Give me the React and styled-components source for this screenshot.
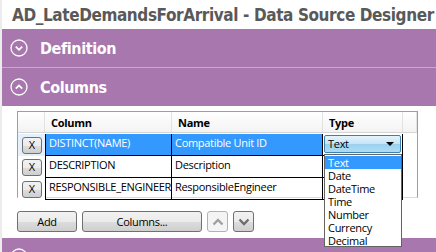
import React from "react";
import styled, { createGlobalStyle, css } from "styled-components";

const Global = createGlobalStyle`
  html, body { margin: 0; padding: 0; background: #fff; }
  body {
    font-family: "Open Sans", "Noto Sans", sans-serif;
    font-size: 11px;
    letter-spacing: -0.3px;
  }
`;

const purple = "#a777ad";

const Window = styled.div`
  position: relative;
  width: 436px;
  height: 252px;
  overflow: hidden;
  background: #fff;
  border-left: 2px solid #ececec;
  box-sizing: border-box;
`;

const Title = styled.div`
  height: 29px;
  padding-left: 10px;
  font-family: "DejaVu Sans Condensed", "Liberation Sans Narrow", sans-serif;
  font-weight: bold;
  font-size: 17px;
  letter-spacing: -0.4px;
  line-height: 31px;
  color: #595959;
  white-space: nowrap;
`;

const Header = styled.div`
  display: flex;
  align-items: center;
  gap: 12px;
  height: 38px;
  padding-left: 8px;
  background: ${purple};
  color: #fff;
  font-family: "DejaVu Sans Condensed", "Liberation Sans Narrow", sans-serif;
  font-weight: bold;
  font-size: 16px;
  letter-spacing: -0.4px;
  ${(p) => p.$divider && css`border-bottom: 1px solid #c7a9cc;`}
`;

const Content = styled.div`
  height: 132px;
  padding: 5px 0 0 15px;
  box-sizing: border-box;
`;

const Grid = styled.div`
  display: grid;
  grid-template-columns: 27px 127px 151px 80px 1fr;
  grid-auto-rows: 22px;
  width: 401px;
  height: 87px;
  box-sizing: border-box;
  border: 1px solid #8ca2b8;
  border-bottom-color: #d4dde6;
  color: #000;
`;

const HeadCell = styled.div`
  height: 20px;
  padding-left: 6px;
  display: flex;
  align-items: center;
  font-weight: bold;
  font-size: 11px;
  background: linear-gradient(#ffffff, #f3f3f3);
  border-right: 1px solid #e2e2e2;
  border-bottom: 1px solid #d5d5d5;
`;

const RowHead = styled.div`
  display: flex;
  align-items: center;
  padding-left: 4px;
  background: ${(p) => (p.$selected ? "#e4f0fb" : "#fff")};
`;

const Cell = styled.div`
  box-sizing: border-box;
  padding: 1px 0 0 3px;
  line-height: 16px;
  white-space: nowrap;
  overflow: hidden;
  border-right: 1px solid #000;
  border-bottom: 1px solid #000;
  ${(p) => p.$first && css`border-left: 1px solid #000;`}
  ${(p) =>
    p.$selected &&
    css`
      background: #3399ff;
      color: #fff;
    `}
`;

const Filler = styled.div``;

const TypeCell = styled(Cell)`
  padding: 1px;
  background: #fff;
`;

const Combo = styled.div`
  display: flex;
  align-items: center;
  justify-content: space-between;
  height: 18px;
  box-sizing: border-box;
  padding: 0 6px 0 3px;
  border: 1px solid #3c7fb1;
  border-radius: 2px;
  background: linear-gradient(#e5f4fc, #c4e5f6 50%, #98d1ef 51%, #b1dcf2);
  color: #000;
  line-height: 16px;
`;

const Arrow = styled.span`
  width: 0;
  height: 0;
  border-left: 4px solid transparent;
  border-right: 4px solid transparent;
  border-top: 4px solid #000;
`;

const XButton = styled.button`
  width: 20px;
  height: 17px;
  padding: 0;
  border: 1px solid #707070;
  border-radius: 3px;
  background: linear-gradient(#f2f2f2, #ebebeb 50%, #dddddd 51%, #cfcfcf);
  font-family: inherit;
  font-size: 11px;
  color: #000;
  line-height: 14px;
`;

const Buttons = styled.div`
  display: flex;
  gap: 5px;
  margin-top: 13px;
`;

const Btn = styled.button`
  width: ${(p) => p.$w}px;
  height: 21px;
  padding: 0;
  box-sizing: border-box;
  border: 1px solid ${(p) => (p.$disabled ? "#adb2b5" : "#707070")};
  border-radius: 3px;
  background: ${(p) =>
    p.$disabled
      ? "#f4f4f4"
      : "linear-gradient(#f2f2f2, #ebebeb 50%, #dddddd 51%, #cfcfcf)"};
  font-family: inherit;
  font-size: 11px;
  letter-spacing: inherit;
  color: #000;
  display: flex;
  align-items: center;
  justify-content: center;
`;

const Dropdown = styled.div`
  position: absolute;
  left: 322px;
  top: 154px;
  width: 78px;
  height: 93px;
  box-sizing: border-box;
  border: 1px solid #646464;
  background: #fff;
  padding-top: 1px;
`;

const Item = styled.div`
  height: 13px;
  line-height: 13px;
  padding-left: 3px;
  color: #000;
  ${(p) =>
    p.$active &&
    css`
      background: #3399ff;
      color: #fff;
    `}
`;

const CircleIcon = ({ up }) => (
  <svg width="18" height="18" viewBox="0 0 18 18">
    <circle cx="9" cy="9" r="8" fill="none" stroke="#fff" strokeWidth="1.3" />
    <path
      d={up ? "M5.8 10.6 L9 7.4 L12.2 10.6" : "M5.8 7.6 L9 10.8 L12.2 7.6"}
      fill="none"
      stroke="#fff"
      strokeWidth="1.8"
    />
  </svg>
);

const Chevron = ({ up, color }) => (
  <svg width="12" height="8" viewBox="0 0 12 8">
    <path
      d={up ? "M1.5 6.5 L6 2 L10.5 6.5" : "M1.5 1.5 L6 6 L10.5 1.5"}
      fill="none"
      stroke={color}
      strokeWidth="2.4"
    />
  </svg>
);

const rows = [
  ["DISTINCT(NAME)", "Compatible Unit ID"],
  ["DESCRIPTION", "Description"],
  ["RESPONSIBLE_ENGINEER", "ResponsibleEngineer"],
];

const types = ["Text", "Date", "DateTime", "Time", "Number", "Currency", "Decimal"];

export default function App() {
  return (
    <>
      <Global />
      <Window>
        <Title>AD_LateDemandsForArrival - Data Source Designer</Title>
        <Header $divider>
          <CircleIcon />
          Definition
        </Header>
        <Header>
          <CircleIcon up />
          Columns
        </Header>
        <Content>
          <Grid>
            <HeadCell />
            <HeadCell>Column</HeadCell>
            <HeadCell>Name</HeadCell>
            <HeadCell>Type</HeadCell>
            <HeadCell />
            {rows.map(([col, name], i) => (
              <React.Fragment key={col}>
                <RowHead $selected={i === 0}>
                  <XButton>X</XButton>
                </RowHead>
                <Cell $first $selected={i === 0}>{col}</Cell>
                <Cell $selected={i === 0}>{name}</Cell>
                {i === 0 ? (
                  <TypeCell>
                    <Combo>
                      Text
                      <Arrow />
                    </Combo>
                  </TypeCell>
                ) : (
                  <Cell />
                )}
                <Filler />
              </React.Fragment>
            ))}
          </Grid>
          <Buttons>
            <Btn $w={60}>Add</Btn>
            <Btn $w={120}>Columns...</Btn>
            <Btn $w={21} $disabled>
              <Chevron up color="#a0a0a0" />
            </Btn>
            <Btn $w={21}>
              <Chevron color="#6e6e6e" />
            </Btn>
          </Buttons>
        </Content>
        <Header>
          <CircleIcon up />
        </Header>
        <Dropdown>
          {types.map((t, i) => (
            <Item key={t} $active={i === 0}>
              {t}
            </Item>
          ))}
        </Dropdown>
      </Window>
    </>
  );
}
